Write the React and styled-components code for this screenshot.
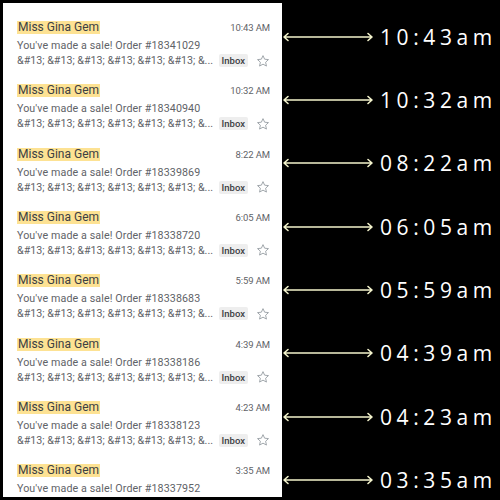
import styled, { createGlobalStyle } from "styled-components";

const GlobalStyle = createGlobalStyle`
  html, body {
    margin: 0;
    padding: 0;
    background: #000;
    overflow: hidden;
  }
`;

const Page = styled.div`
  display: grid;
  grid-template-columns: 279px 1fr;
  padding: 3px 0 0 3px;
  height: 497px;
  box-sizing: border-box;
  overflow: hidden;
`;

const Inbox = styled.div`
  background: #fff;
  padding-top: 2px;
  overflow: hidden;
  font-family: Roboto, "Liberation Sans", sans-serif;
`;

const Notes = styled.div`
  padding-top: 2px;
`;

const MailRow = styled.div`
  height: 63.33px;
  box-sizing: border-box;
  padding: 16px 12px 0 14px;
  display: flex;
  flex-direction: column;
`;

const TopLine = styled.div`
  display: flex;
  justify-content: space-between;
  align-items: center;
  height: 13px;
`;

const Sender = styled.span`
  background: #fde293;
  color: #3c4043;
  font-size: 12px;
  line-height: 13px;
  padding: 0 1px;
`;

const Time = styled.span`
  color: #5f6368;
  font-size: 9.5px;
  letter-spacing: -0.1px;
`;

const Subject = styled.div`
  color: #5f6368;
  font-size: 10.7px;
  line-height: 15px;
  margin-top: 4px;
  letter-spacing: 0.1px;
`;

const BottomLine = styled.div`
  display: flex;
  align-items: center;
  height: 15px;
`;

const Snippet = styled.span`
  color: #5f6368;
  font-size: 10.7px;
  white-space: nowrap;
`;

const Label = styled.span`
  background: #eeeeee;
  color: #3c4043;
  font-size: 9.5px;
  font-weight: 500;
  line-height: 13px;
  padding: 0 3px;
  border-radius: 2px;
  margin-left: auto;
`;

const Star = styled.svg`
  margin-left: 8px;
  flex: none;
`;

const Note = styled.div`
  height: 63.33px;
  display: flex;
  align-items: center;
`;

const Arrow = styled.svg`
  flex: none;
`;

const Stamp = styled.span`
  color: #fff;
  font-family: "Open Sans", sans-serif;
  font-size: 21px;
  letter-spacing: 4.6px;
  margin-left: 6px;
`;

const mails = [
  ["10:43 AM", "18341029", "10:43am"],
  ["10:32 AM", "18340940", "10:32am"],
  ["8:22 AM", "18339869", "08:22am"],
  ["6:05 AM", "18338720", "06:05am"],
  ["5:59 AM", "18338683", "05:59am"],
  ["4:39 AM", "18338186", "04:39am"],
  ["4:23 AM", "18338123", "04:23am"],
  ["3:35 AM", "18337952", "03:35am"],
];

function StarIcon() {
  return (
    <Star width="14" height="14" viewBox="0 0 24 24">
      <path
        d="M12 2.8l2.8 6.1 6.6.7-4.9 4.5 1.4 6.6L12 17.4l-5.9 3.3 1.4-6.6-4.9-4.5 6.6-.7z"
        fill="none"
        stroke="#9aa0a6"
        strokeWidth="1.6"
        strokeLinejoin="round"
      />
    </Star>
  );
}

function DoubleArrow() {
  return (
    <Arrow width="92" height="10" viewBox="0 0 92 10">
      <path
        d="M2 5h88M6 1.5L2 5l4 3.5M86 1.5L90 5l-4 3.5"
        fill="none"
        stroke="#f3f3cc"
        strokeWidth="1.6"
        strokeLinecap="round"
        strokeLinejoin="round"
      />
    </Arrow>
  );
}

export default function App() {
  return (
    <>
      <GlobalStyle />
      <Page>
        <Inbox>
          {mails.map(([time, order]) => (
            <MailRow key={order}>
              <TopLine>
                <Sender>Miss Gina Gem</Sender>
                <Time>{time}</Time>
              </TopLine>
              <Subject>You've made a sale! Order #{order}</Subject>
              <BottomLine>
                <Snippet>&amp;#13; &amp;#13; &amp;#13; &amp;#13; &amp;#13; &amp;#13; &amp;...</Snippet>
                <Label>Inbox</Label>
                <StarIcon />
              </BottomLine>
            </MailRow>
          ))}
        </Inbox>
        <Notes>
          {mails.map(([, order, stamp]) => (
            <Note key={order}>
              <DoubleArrow />
              <Stamp>{stamp}</Stamp>
            </Note>
          ))}
        </Notes>
      </Page>
    </>
  );
}
